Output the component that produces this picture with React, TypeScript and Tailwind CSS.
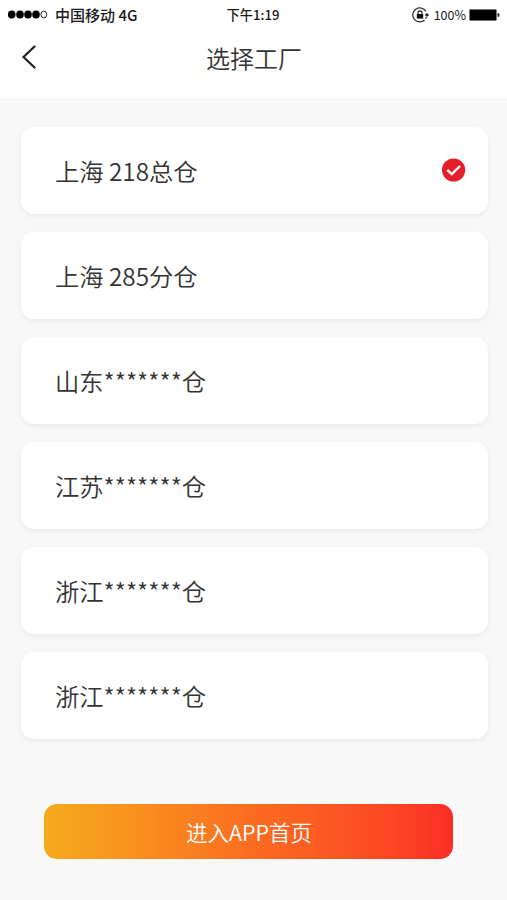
import { useState } from "react";

type Factory = { id: number; name: string };

const factories: Factory[] = [
  { id: 1, name: "上海 218总仓" },
  { id: 2, name: "上海 285分仓" },
  { id: 3, name: "山东*******仓" },
  { id: 4, name: "江苏*******仓" },
  { id: 5, name: "浙江*******仓" },
  { id: 6, name: "浙江*******仓" },
];

function StatusBar() {
  return (
    <div className="h-[29px] grid grid-cols-3 items-center pl-2 pr-[7px] text-[#1a1a1a] leading-none">
      <div className="flex items-center gap-[7px]">
        <svg width="40" height="9" viewBox="0 0 40 9" fill="#000">
          {[3.7, 12, 20, 28].map((cx) => (
            <ellipse key={cx} cx={cx} cy="4.5" rx="3.8" ry="4" />
          ))}
          <ellipse cx="35.8" cy="4.5" rx="2.9" ry="3.4" fill="none" stroke="#222" />
        </svg>
        <span className="text-[15px] font-medium whitespace-nowrap">中国移动 4G</span>
      </div>
      <span className="text-[13.2px] font-medium text-center -ml-0.5">下午1:19</span>
      <div className="flex items-center justify-end">
        <svg width="17" height="16" viewBox="0 0 17 16" fill="none" stroke="#333" strokeWidth="1.3">
          <path d="M13.8 4.4A7 7 0 1 0 12.6 13" />
          <path d="M14.4 10a7 7 0 0 1-.8 1.6" />
          <circle cx="14.9" cy="7.9" r="1.7" fill="#222" stroke="none" />
          <rect x="4.8" y="7" width="6.4" height="4.6" fill="#111" stroke="none" />
          <path d="M6 7.2V6a2 2 0 0 1 4 0v1.2" />
        </svg>
        <span className="ml-[5px] pt-0.5 text-[12.5px]">100%</span>
        <svg className="ml-[3px]" width="31" height="12" viewBox="0 0 31 12">
          <rect x="0.5" y="0.5" width="27" height="11" rx="1" fill="#000" stroke="#777" />
          <path d="M28.5 4c1.6 0 2 .8 2 2s-.4 2-2 2z" fill="#222" />
        </svg>
      </div>
    </div>
  );
}

function CheckBadge() {
  return (
    <svg width="24" height="24" viewBox="0 0 24 24" fill="none">
      <circle cx="11.6" cy="12" r="11.6" fill="#e61e2b" />
      <path d="M5.2 12l4.6 4.2 8.2-8.2" stroke="#fff" strokeWidth="2.4" />
    </svg>
  );
}

export default function App() {
  const [selectedId, setSelectedId] = useState(1);

  return (
    <div className="w-full h-[900px] bg-[#f8f8f8] text-[#333] font-['Noto_Sans_CJK_SC',sans-serif] flex flex-col overflow-hidden">
      <header className="h-[98px] bg-white">
        <StatusBar />
        <div className="h-[56px] px-5 grid grid-cols-[1fr_auto_1fr] items-center">
          <button className="justify-self-start">
            <svg width="18" height="24" viewBox="0 0 18 24" fill="none" stroke="#222" strokeWidth="2.2" strokeLinecap="round">
              <path d="M14.5 1.5L3.5 12l11 10.5" />
            </svg>
          </button>
          <h1 className="pt-0.5 pl-px text-2xl leading-none font-[350]">选择工厂</h1>
        </div>
      </header>

      <main className="pt-[29px] pl-[21px] pr-[19px] flex flex-col gap-[18px]">
        {factories.map((factory) => (
          <button
            key={factory.id}
            onClick={() => setSelectedId(factory.id)}
            className="h-[87px] bg-white rounded-[13px] shadow-[0_2px_5px_rgba(0,0,0,0.06)] pl-[34px] pr-[22px] pb-px flex items-center justify-between text-[24.3px] leading-none font-[350]"
          >
            <span className="pt-0.5">{factory.name}</span>
            {factory.id === selectedId && <CheckBadge />}
          </button>
        ))}
      </main>

      <button className="mt-[65px] ml-[44px] mr-[54px] h-[55px] shrink-0 rounded-[13px] bg-linear-to-r from-[#f5aa1c] via-[#fa6d20] to-[#fb2d24] pl-px text-white text-[21.5px] leading-none font-[350]">
        进入APP首页
      </button>
    </div>
  );
}
